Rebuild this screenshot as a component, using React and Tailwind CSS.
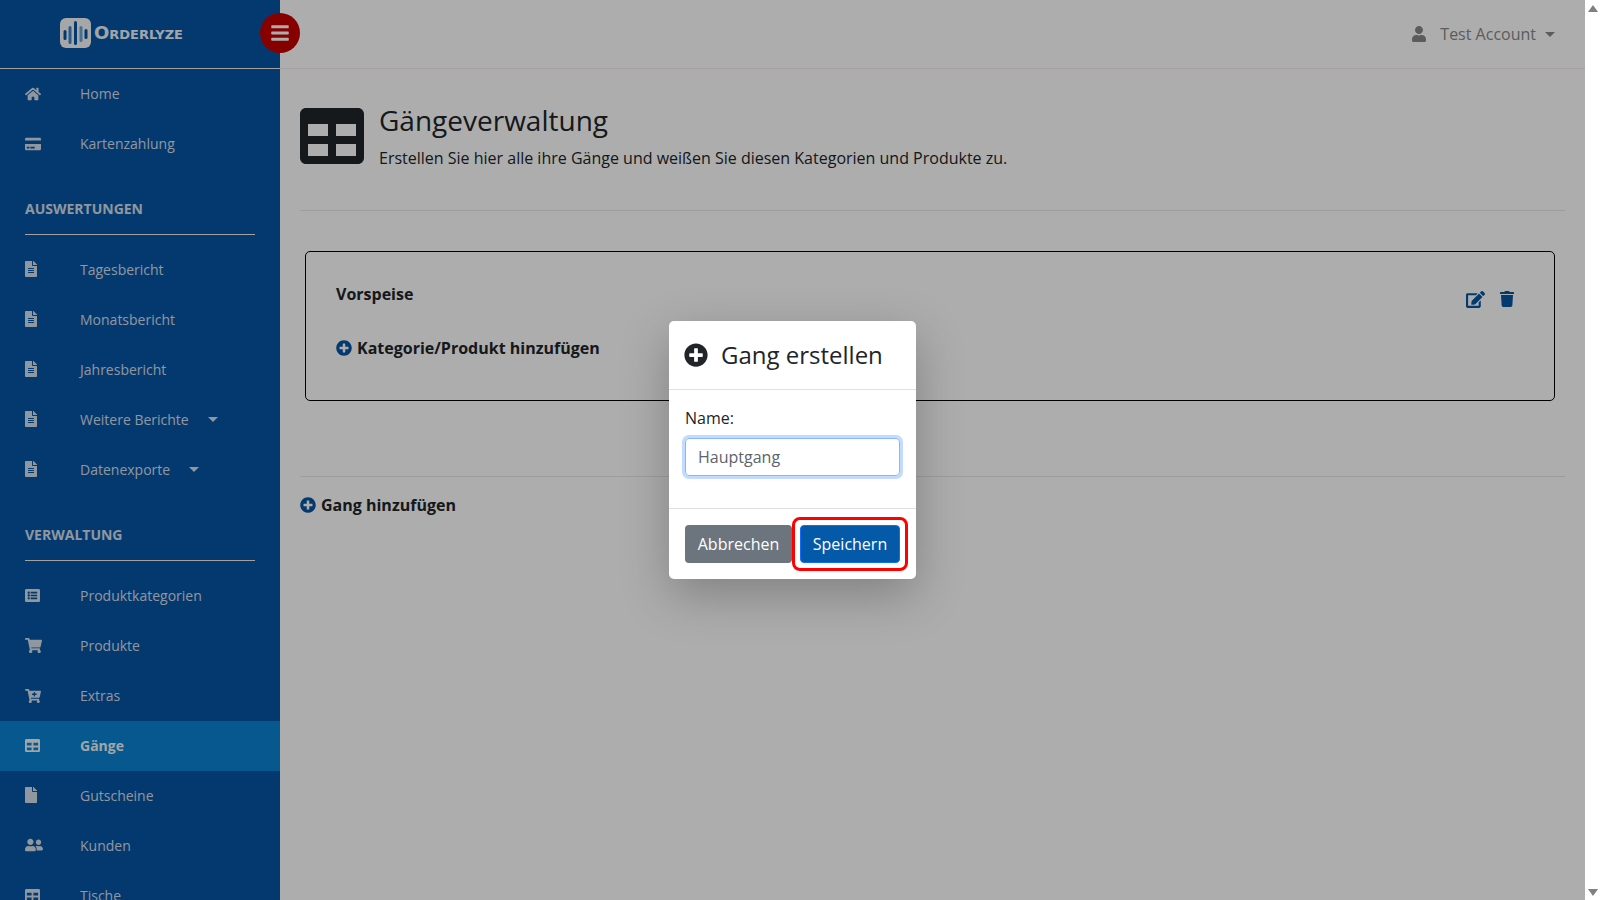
import React from 'react'
import {
  FaBars, FaCartPlus, FaCreditCard, FaEdit, FaFile, FaFileAlt, FaHome, FaListAlt,
  FaPlusCircle, FaShoppingCart, FaTable, FaTrash, FaUser, FaUserFriends,
} from 'react-icons/fa'

function Caret({ className }) {
  return <span className={`inline-block w-0 h-0 border-x-[5px] border-x-transparent border-t-[5px] ${className}`}></span>
}

function NavItem({ icon: Icon, label, active, caret, iconClass = 'w-[15px] h-[15px]' }) {
  return (
    <div className={`flex items-center h-[50px] pl-[25px] pb-[2px] text-[14px] ${active ? 'bg-[#0a82d2] font-bold text-[#eef3f8]' : 'text-[#d5dfe9]'}`}>
      <span className="w-[55px] flex items-center">
        <Icon className={iconClass} />
      </span>
      <span>{label}</span>
      {caret && <Caret className="border-t-[#d5dfe9] ml-[19px]" />}
    </div>
  )
}

function SectionTitle({ children }) {
  return (
    <div className="mx-[25px] pt-[30px] pb-[15px] mb-[10px] border-b border-[#eeeeee]">
      <div className="h-[20px] leading-[20px] text-[14px] font-bold text-[#d5dfe9]">{children}</div>
    </div>
  )
}

function Logo() {
  return (
    <div className="flex items-center gap-[3px]">
      <svg width="31" height="30" viewBox="0 0 31 30">
        <rect width="31" height="30" rx="6" fill="#f4f6f8" />
        <rect x="3.5" y="12" width="3" height="10" rx="1.5" fill="#0755a5" />
        <rect x="8.5" y="8" width="3" height="18" rx="1.5" fill="#3f86c6" />
        <rect x="14" y="3" width="3" height="24" rx="1.5" fill="#0755a5" />
        <rect x="19.5" y="8" width="3" height="16" rx="1.5" fill="#6aa5d8" />
        <rect x="24.5" y="11" width="3" height="10" rx="1.5" fill="#0755a5" />
      </svg>
      <span className="text-[18px] leading-none font-bold text-[#eef3f8] [font-variant:small-caps] font-['DejaVu_Sans',sans-serif]">Orderlyze</span>
    </div>
  )
}

function Sidebar() {
  return (
    <div className="w-[280px] h-full shrink-0 bg-[#0755a5] overflow-hidden">
      <div className="h-[69px] border-b border-[#f3eeea] flex items-center pl-[60px] pb-[2px]">
        <Logo />
      </div>
      <NavItem icon={FaHome} label="Home" iconClass="w-4 h-4 mt-[2px]" />
      <NavItem icon={FaCreditCard} label="Kartenzahlung" iconClass="w-4 h-4 mt-[2px]" />
      <SectionTitle>AUSWERTUNGEN</SectionTitle>
      <NavItem icon={FaFileAlt} label="Tagesbericht" iconClass="w-[12px] h-[16px]" />
      <NavItem icon={FaFileAlt} label="Monatsbericht" iconClass="w-[12px] h-[16px]" />
      <NavItem icon={FaFileAlt} label="Jahresbericht" iconClass="w-[12px] h-[16px]" />
      <NavItem icon={FaFileAlt} label="Weitere Berichte" caret iconClass="w-[12px] h-[16px]" />
      <NavItem icon={FaFileAlt} label="Datenexporte" caret iconClass="w-[12px] h-[16px]" />
      <SectionTitle>VERWALTUNG</SectionTitle>
      <NavItem icon={FaListAlt} label="Produktkategorien" />
      <NavItem icon={FaShoppingCart} label="Produkte" iconClass="w-[17px] h-[17px]" />
      <NavItem icon={FaCartPlus} label="Extras" iconClass="w-4 h-4 mt-[1px]" />
      <NavItem icon={FaTable} label="Gänge" active />
      <NavItem icon={FaFile} label="Gutscheine" iconClass="w-[12px] h-[16px]" />
      <NavItem icon={FaUserFriends} label="Kunden" iconClass="w-[18px] h-[18px]" />
      <NavItem icon={FaTable} label="Tische" />
    </div>
  )
}

function Main() {
  return (
    <div className="flex-1 h-full bg-white">
      <div className="h-[69px] border-b border-[#f3eeee] flex items-center justify-end pr-[30px] text-[#888888]">
        <FaUser className="w-[14px] h-[16px] mr-[14px]" />
        <span className="text-[16px]">Test Account</span>
        <Caret className="border-t-[#888888] ml-[9px]" />
      </div>
      <div className="px-[20px]">
        <div className="flex pt-[35px] h-[142px] border-b border-[#e8e8e8]">
          <FaTable className="w-16 h-16 text-[#212529] shrink-0" />
          <div className="ml-[15px] -mt-[1px]">
            <h1 className="text-[28px] leading-[34px] text-[#212529]">Gängeverwaltung</h1>
            <p className="text-[16px] leading-[24px] mt-[9px] text-[#212529]">Erstellen Sie hier alle ihre Gänge und weißen Sie diesen Kategorien und Produkte zu.</p>
          </div>
        </div>
        <div className="mt-[40px] ml-[5px] mr-[10px] h-[150px] border border-black rounded-[5px] pl-[30px] pr-[40px] pt-[30px] flex justify-between">
          <div>
            <div className="text-[16px] leading-[24px] font-bold text-[#212529]">Vorspeise</div>
            <div className="flex items-center mt-[30px] text-[16px] leading-[24px] font-bold text-[#212529]">
              <FaPlusCircle className="w-4 h-4 mr-[5px] text-[#0755a5]" />
              Kategorie/Produkt hinzufügen
            </div>
          </div>
          <div className="flex gap-[15px] pt-[9px] text-[#0755a5]">
            <FaEdit className="w-[19px] h-[19px] -mt-[1px]" />
            <FaTrash className="w-[14px] h-[16px]" />
          </div>
        </div>
        <div className="mt-[75px] border-t border-[#e8e8e8] pt-[16px] flex items-center text-[16px] leading-[24px] font-bold text-[#212529]">
          <FaPlusCircle className="w-4 h-4 mr-[5px] text-[#0755a5]" />
          Gang hinzufügen
        </div>
      </div>
    </div>
  )
}

function Modal() {
  return (
    <div className="absolute inset-0 bg-black/32 flex justify-center items-start pt-[321px]">
      <div className="w-[247px] bg-white rounded-[5px] shadow-[0_16px_48px_rgba(0,0,0,0.25)] text-[#212529]">
        <div className="h-[69px] border-b border-[#dee2e6] flex items-center px-[15px]">
          <FaPlusCircle className="w-6 h-6" />
          <span className="ml-[13px] text-[24px]">Gang erstellen</span>
        </div>
        <div className="h-[119px] border-b border-[#dee2e6] px-[16px] pt-[16px]">
          <label className="block text-[16px] leading-[24px] mb-[8px]">Name:</label>
          <div className="h-[38px] rounded-[4px] border border-[#86b7fe] ring-[3px] ring-[#0d6efd]/25 flex items-center px-[12px] text-[16px] text-[#5c646c]">Hauptgang</div>
        </div>
        <div className="h-[70px] px-[16px] pt-[16px] flex gap-[8px]">
          <div className="w-[107px] h-[38px] rounded-[4px] bg-[#6c757d] text-white text-[16px] flex items-center justify-center">Abbrechen</div>
          <div className="w-[100px] h-[38px] rounded-[4px] bg-[#0559a9] border border-[#0d6efd] text-white text-[16px] flex items-center justify-center">Speichern</div>
        </div>
      </div>
      <div className="absolute left-[792px] top-[517px] w-[116px] h-[54px] border-[3px] border-[#ff0000] rounded-[8px]"></div>
    </div>
  )
}

export default function App() {
  return (
    <div className="relative flex w-[1600px] h-[900px] overflow-hidden font-['Open_Sans',sans-serif] bg-white">
      <div className="relative flex w-[1585px] h-full">
        <Sidebar />
        <Main />
        <div className="absolute left-[260px] top-[13px] w-10 h-10 rounded-full bg-[#c80000] flex items-center justify-center text-white">
          <FaBars className="w-[20px] h-[20px]" />
        </div>
        <Modal />
      </div>
      <div className="w-[15px] h-full flex flex-col items-center justify-between pt-[5px] pb-[4px] bg-white">
        <span className="w-0 h-0 border-x-[5px] border-x-transparent border-b-[7px] border-b-[#808080]"></span>
        <span className="w-0 h-0 border-x-[5px] border-x-transparent border-t-[7px] border-t-[#808080]"></span>
      </div>
    </div>
  )
}
